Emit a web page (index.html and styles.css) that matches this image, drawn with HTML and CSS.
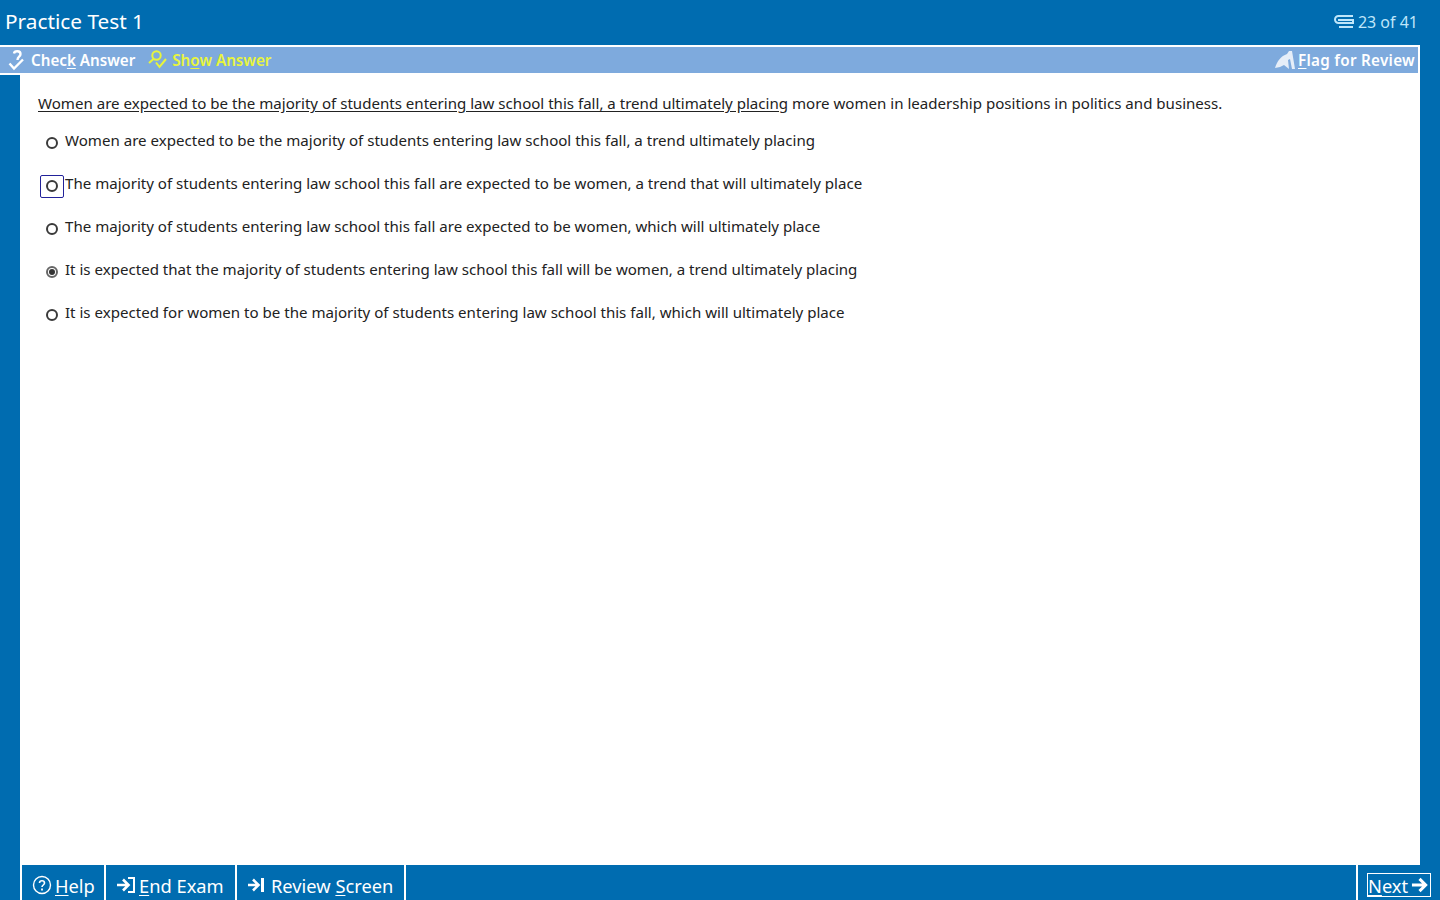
FILE: index.html
```html
<!DOCTYPE html>
<html lang="en">
<head>
  <meta charset="UTF-8">
  <title>Practice Test 1</title>
  <link rel="stylesheet" href="styles.css">
</head>
<body>
  <div class="title-bar">
    <div class="test-name">Practice Test 1</div>
    <div class="counter">
      <svg class="clip-icon" width="20" height="15" viewBox="0 0 20 15" fill="none" stroke="#bfe6fa" stroke-width="2">
        <path d="M5 2h14M5 2H4.500a3.500 3.500 0 0 0 0 7H19v-3H4M5 13h14"/>
      </svg>
      <span>23 of 41</span>
    </div>
  </div>

  <div class="tool-bar">
    <button class="tool">
      <svg width="18" height="22" viewBox="0 0 18 22" fill="none" stroke="#fff" stroke-width="2.400">
        <path d="M6 4.500C6.500 1.500 12.500 1.500 12.500 5C12.500 8 9.500 7.500 9.500 11"/><path d="M1.500 14.500l4.500 5 9-9"/>
      </svg>
      <span>Chec<u>k</u> Answer</span>
    </button>
    <button class="tool tool-on">
      <svg width="19" height="20" viewBox="0 0 19 20" fill="none" stroke="#e8f53c" stroke-width="2">
        <circle cx="8.500" cy="5.500" r="4.200"/><path d="M5.500 9L1 13"/><path d="M8 12.500l3.500 4.500 6.500-8"/>
      </svg>
      <span>Sh<u>o</u>w Answer</span>
    </button>
    <button class="tool tool-flag">
      <svg width="20" height="20" viewBox="0 0 20 20" fill="#e6eef8">
        <path d="M0 18C2 11 6 6 12 4L14 1h3l3 18h-3l-2-10-2 1 1 9-5-4-4 2z"/>
      </svg>
      <span><u>F</u>lag for Review</span>
    </button>
  </div>

  <div class="middle">
    <main class="question">
      <p class="stem"><u>Women are expected to be the majority of students entering law school this fall, a trend ultimately placing</u> more women in leadership positions in politics and business.</p>
      <div class="answers">
        <label class="answer"><span class="radio-box"><span class="radio"></span></span>Women are expected to be the majority of students entering law school this fall, a trend ultimately placing</label>
        <label class="answer"><span class="radio-box focused"><span class="radio"></span></span>The majority of students entering law school this fall are expected to be women, a trend that will ultimately place</label>
        <label class="answer"><span class="radio-box"><span class="radio"></span></span>The majority of students entering law school this fall are expected to be women, which will ultimately place</label>
        <label class="answer"><span class="radio-box"><span class="radio checked"></span></span>It is expected that the majority of students entering law school this fall will be women, a trend ultimately placing</label>
        <label class="answer"><span class="radio-box"><span class="radio"></span></span>It is expected for women to be the majority of students entering law school this fall, which will ultimately place</label>
      </div>
    </main>
  </div>

  <div class="bottom-bar">
    <button class="nav nav-help">
      <svg width="20" height="20" viewBox="0 0 20 20" fill="none" stroke="#fff" stroke-width="1.400">
        <circle cx="10" cy="10" r="8.500"/><path d="M7.500 8C7.500 5 12.500 5 12.500 8C12.500 10 10 10 10 12" stroke-width="1.600"/><path d="M10 13.500v2" stroke-width="1.800"/>
      </svg>
      <span><u>H</u>elp</span>
    </button>
    <button class="nav nav-end">
      <svg width="20" height="18" viewBox="0 0 20 18" fill="none" stroke="#fff" stroke-width="2.600">
        <path d="M1 9h10M7 3.500L12.500 9 7 14.500"/><path d="M12 2h6v14h-6" stroke-width="2"/>
      </svg>
      <span><u>E</u>nd Exam</span>
    </button>
    <button class="nav nav-review">
      <svg width="18" height="18" viewBox="0 0 18 18" fill="none" stroke="#fff" stroke-width="2.600">
        <path d="M1 9h9M6 3.500L11.500 9 6 14.500"/><path d="M15.500 2v14" stroke-width="3"/>
      </svg>
      <span>Review <u>S</u>creen</span>
    </button>
    <div class="spacer"></div>
    <button class="nav nav-next">
      <span class="next-focus"><span><u>N</u>ext</span>
        <svg width="17" height="18" viewBox="0 0 18 18" fill="none" stroke="#fff" stroke-width="3.200">
          <path d="M1 9h14M9 2.500L15.500 9 9 15.500"/>
        </svg>
      </span>
    </button>
  </div>
</body>
</html>
```

FILE: styles.css
```css
* {
  box-sizing: border-box;
}

html, body {
  height: 100%;
}

body {
  margin: 0;
  height: 900px;
  overflow: hidden;
  background: #006cb0;
  color: #222;
  font-family: "Noto Sans", sans-serif;
  display: flex;
  flex-direction: column;
}

button {
  font-family: inherit;
  background: none;
  border: none;
  padding: 0;
  color: inherit;
  display: flex;
  align-items: center;
}

u {
  text-underline-offset: 2px;
}

.title-bar {
  height: 45px;
  flex: none;
  display: flex;
  align-items: center;
  justify-content: space-between;
  padding: 0 22px 2px 5px;
  color: #fff;
}

.test-name {
  font-size: 20.800px;
  margin-bottom: 2px;
}

.counter {
  display: flex;
  align-items: center;
  gap: 4px;
  font-size: 16px;
  color: #bfe6fa;
}

.tool-bar {
  height: 30px;
  flex: none;
  width: 1420px;
  display: flex;
  align-items: center;
  background: #7eaadd;
  border-top: 2px solid #fff;
  border-bottom: 2px solid #fff;
  border-right: 2px solid #fff;
  padding: 0 3px 0 8px;
}

.tool {
  gap: 5px;
  color: #fff;
  font-size: 15.200px;
  font-weight: 600;
}

.tool-on {
  color: #e8f53c;
  margin-left: 13px;
}

.tool-flag {
  margin-left: auto;
  gap: 3px;
  letter-spacing: 0.300px;
}

.middle {
  flex: 1;
  padding-left: 20px;
  padding-right: 20px;
  min-height: 0;
  display: flex;
}

.question {
  flex: 1;
  background: #fff;
  padding: 18px 18px 0 18px;
  font-size: 15.080px;
}

.stem {
  margin: 0;
  line-height: 20px;
}

.answers {
  display: flex;
  flex-direction: column;
  gap: 13px;
  margin-top: 12px;
}

.answer {
  display: flex;
  align-items: center;
  height: 30px;
}

.radio-box {
  width: 24px;
  height: 23px;
  margin-left: 2px;
  margin-right: 1px;
  margin-top: 6px;
  padding-right: 1px;
  display: flex;
  align-items: center;
  justify-content: center;
  border: 1px solid transparent;
  border-radius: 2px;
}

.radio-box.focused {
  border-color: #22229a;
}

.radio {
  width: 12px;
  height: 12px;
  border: 2px solid #3a3a3a;
  border-radius: 50%;
  display: flex;
  align-items: center;
  justify-content: center;
}

.radio.checked {
  border-color: #666;
}

.radio.checked::after {
  content: "";
  width: 6px;
  height: 6px;
  border-radius: 50%;
  background: #333;
}

.bottom-bar {
  height: 35px;
  flex: none;
  display: flex;
  padding-left: 20px;
  color: #fff;
}

.nav {
  gap: 3px;
  color: #fff;
  font-size: 18.300px;
  height: 35px;
  border-left: 2px solid #fff;
  padding-top: 5px;
  padding-left: 10px;
}

.nav-help {
  width: 84px;
}

.nav-end {
  width: 131px;
}

.nav-review {
  width: 171px;
  gap: 6px;
  border-right: 2px solid #fff;
}

.nav-next {
  width: 84px;
  padding-left: 9px;
}

.spacer {
  flex: 1;
}

.next-focus {
  display: flex;
  align-items: center;
  justify-content: space-between;
  width: 64px;
  height: 24px;
  border: 1px solid #fff;
  padding-right: 2px;
}
```
